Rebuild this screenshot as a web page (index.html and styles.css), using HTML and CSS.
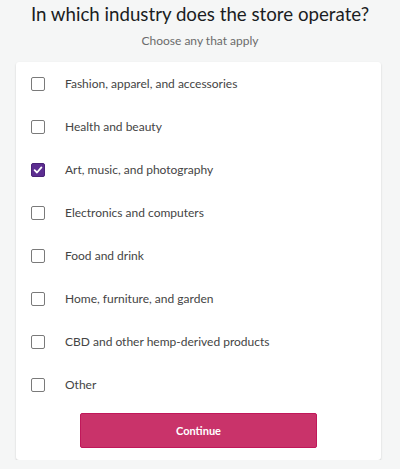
FILE: index.html
```html
<!DOCTYPE html>
<html>
<head>
<meta charset="utf-8">
<link rel="stylesheet" href="styles.css">
</head>
<body>
<div class="page">
  <h1 class="title">In which industry does the store operate?</h1>
  <p class="subtitle">Choose any that apply</p>
  <div class="card">
    <label class="row"><span class="box"></span><span class="label">Fashion, apparel, and accessories</span></label>
    <label class="row"><span class="box"></span><span class="label">Health and beauty</span></label>
    <label class="row"><span class="box checked"><svg width="10" height="10" viewBox="0 0 10 10"><path d="M1.6 5.2 L4 7.5 L8.4 2.4" fill="none" stroke="#fff" stroke-width="1.8" stroke-linecap="round" stroke-linejoin="round"/></svg></span><span class="label">Art, music, and photography</span></label>
    <label class="row"><span class="box"></span><span class="label">Electronics and computers</span></label>
    <label class="row"><span class="box"></span><span class="label">Food and drink</span></label>
    <label class="row"><span class="box"></span><span class="label">Home, furniture, and garden</span></label>
    <label class="row"><span class="box"></span><span class="label">CBD and other hemp-derived products</span></label>
    <label class="row"><span class="box"></span><span class="label">Other</span></label>
    <div class="actions"><button class="continue">Continue</button></div>
  </div>
</div>
</body>
</html>
```
FILE: styles.css
```css
html, body {
  margin: 0;
  padding: 0;
  background: #f5f6f6;
  font-family: "Lato", "Noto Sans", sans-serif;
}
.page {
  display: flex;
  flex-direction: column;
  align-items: center;
  padding-top: 1px;
}
.title {
  margin: 0;
  font-size: 18.7px;
  font-weight: 400;
  color: #1a1d22;
  line-height: 26px;
}
.subtitle {
  margin: 6px 0 0;
  font-size: 12px;
  color: #6b6b6b;
  line-height: 16px;
}
.card {
  margin-top: 13px;
  margin-left: 16px;
  align-self: flex-start;
  width: 365px;
  box-sizing: border-box;
  background: #fff;
  border-radius: 3px;
  box-shadow: 0 1px 2px rgba(0,0,0,0.18);
  padding: 0 15px 12px;
  display: flex;
  flex-direction: column;
}
.row {
  height: 43px;
  display: flex;
  align-items: center;
  gap: 20px;
}
.box {
  width: 14px;
  height: 14px;
  box-sizing: border-box;
  border: 1.5px solid #7a7a7a;
  border-radius: 2px;
  display: flex;
  align-items: center;
  justify-content: center;
  flex: none;
}
.box.checked {
  background: #5c2d91;
  border-color: #4b2278;
}
.label {
  font-size: 12px;
  color: #444;
}
.actions {
  display: flex;
  justify-content: center;
  margin-top: 7px;
}
.continue {
  width: 237px;
  height: 35px;
  background: #c9336a;
  border: 1px solid #c0185a;
  border-radius: 2px;
  color: #fff;
  font-family: "Lato", "Noto Sans", sans-serif;
  font-size: 11px;
  font-weight: 700;
}
```
